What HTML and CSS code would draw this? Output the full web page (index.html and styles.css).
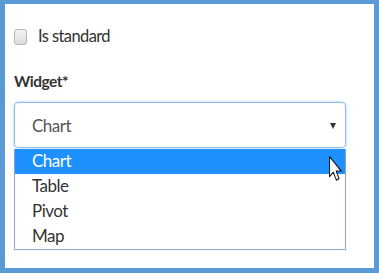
FILE: index.html
```html
<!DOCTYPE html>
<html lang="en">
<head>
    <meta charset="UTF-8">
    <meta name="viewport" content="width=device-width, initial-scale=1.0">
    <title>Widget settings</title>
    <link rel="stylesheet" href="styles.css">
</head>
<body>
    <div class="card">
        <label class="check">
            <span class="check-box"></span>
            <span>Is standard</span>
        </label>

        <div class="field">
            <div class="field-label">Widget*</div>
            <div class="select">
                <span>Chart</span>
                <span class="arrow"></span>
            </div>
            <ul class="options">
                <li class="active">Chart</li>
                <li>Table</li>
                <li>Pivot</li>
                <li>Map</li>
            </ul>
        </div>

        <svg class="cursor" viewBox="0 0 12 20" preserveAspectRatio="none">
            <path d="M0.5 0.5 L0.5 16.5 L4 13 L6.8 19.3 L9.3 18.2 L6.6 12 L11.3 12 Z" fill="#fff" stroke="#111" stroke-width="0.9" stroke-linejoin="round"/>
        </svg>
    </div>
</body>
</html>
```

FILE: styles.css
```css
body {
    margin: 0;
    font-family: Lato, "Open Sans", sans-serif;
    background: #5b9bd5;
}
.card {
    position: relative;
    width: 379px;
    height: 273px;
    box-sizing: border-box;
    background: #fff;
    border: 5px solid #5b9bd5;
    border-top-width: 4px;
    padding: 22px 28px 0 9px;
}
.check {
    display: flex;
    align-items: center;
    gap: 11px;
    height: 20px;
    font-size: 16.5px;
    color: #333;
    letter-spacing: -0.6px;
}
.check-box {
    width: 11px;
    height: 14px;
    border: 1px solid #b5b5b5;
    border-radius: 3px;
    background: linear-gradient(#f4f4f4, #dcdcdc);
    margin-top: 1px;
}
.field {
    margin-top: 25px;
}
.field-label {
    font-size: 15.5px;
    line-height: 20px;
    font-weight: bold;
    color: #333;
    letter-spacing: -0.5px;
}
.select {
    display: flex;
    align-items: center;
    justify-content: space-between;
    margin-top: 11px;
    height: 46px;
    box-sizing: border-box;
    padding: 0 9px 0 17px;
    border: 1px solid #8cbcec;
    border-radius: 4px;
    box-shadow: 0 0 3px rgba(102, 175, 233, 0.6);
    font-size: 17px;
    color: #555;
    letter-spacing: -0.5px;
}
.arrow {
    width: 0;
    height: 0;
    border-left: 3px solid transparent;
    border-right: 3px solid transparent;
    border-top: 6px solid #333;
    margin-top: 2px;
}
.options {
    list-style: none;
    margin: 1px 0 0;
    padding: 0;
    border: 1px solid #8ea6cc;
    border-top: none;
}
.options li {
    height: 25px;
    line-height: 24px;
    padding-left: 17px;
    font-size: 17px;
    color: #333;
    letter-spacing: -0.5px;
}
.options li.active {
    background: #1e90ff;
    color: #fff;
}
.cursor {
    position: absolute;
    left: 324px;
    top: 152px;
    width: 13px;
    height: 25px;
}
```
